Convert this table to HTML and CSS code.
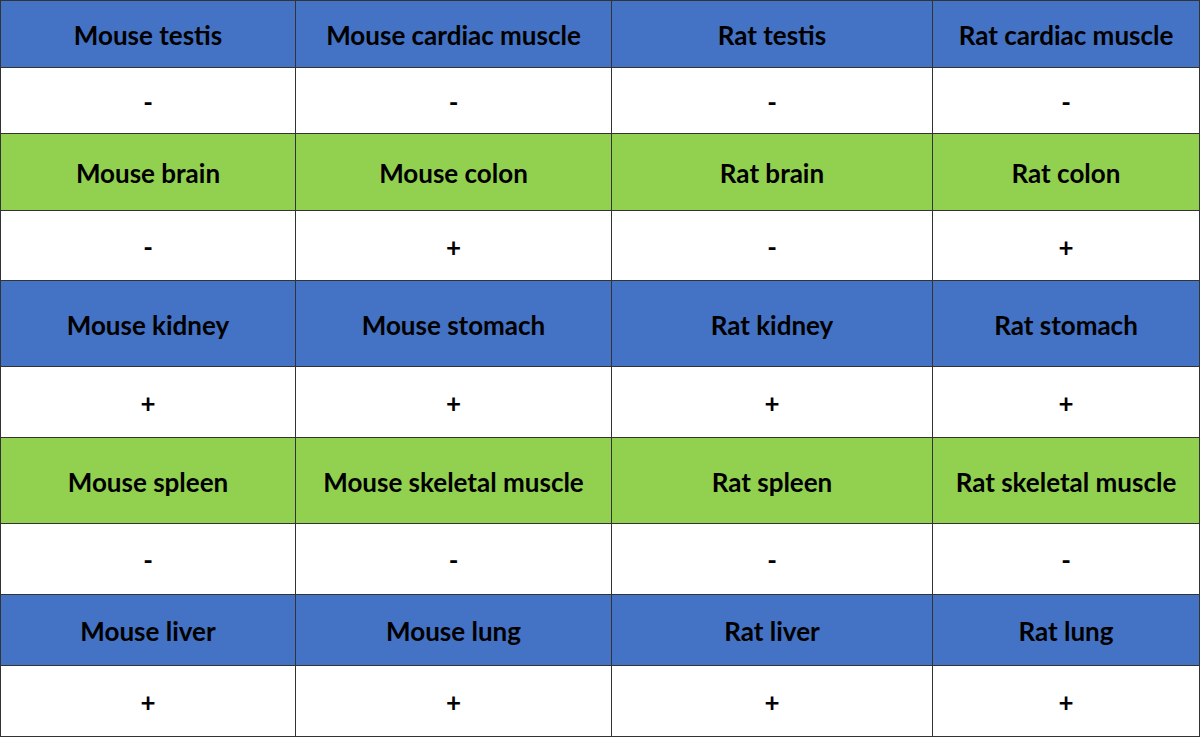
FILE: index.html
```html
<!DOCTYPE html>
<html>
<head>
<meta charset="utf-8">
<link rel="stylesheet" href="styles.css">
</head>
<body>
<div class="grid">
  <div class="cell blue">Mouse testis</div>
  <div class="cell blue">Mouse cardiac muscle</div>
  <div class="cell blue">Rat testis</div>
  <div class="cell blue">Rat cardiac muscle</div>
  <div class="cell val">-</div>
  <div class="cell val">-</div>
  <div class="cell val">-</div>
  <div class="cell val">-</div>
  <div class="cell green">Mouse brain</div>
  <div class="cell green">Mouse colon</div>
  <div class="cell green">Rat brain</div>
  <div class="cell green">Rat colon</div>
  <div class="cell val">-</div>
  <div class="cell val">+</div>
  <div class="cell val">-</div>
  <div class="cell val">+</div>
  <div class="cell blue">Mouse kidney</div>
  <div class="cell blue">Mouse stomach</div>
  <div class="cell blue">Rat kidney</div>
  <div class="cell blue">Rat stomach</div>
  <div class="cell val">+</div>
  <div class="cell val">+</div>
  <div class="cell val">+</div>
  <div class="cell val">+</div>
  <div class="cell green">Mouse spleen</div>
  <div class="cell green">Mouse skeletal muscle</div>
  <div class="cell green">Rat spleen</div>
  <div class="cell green">Rat skeletal muscle</div>
  <div class="cell val">-</div>
  <div class="cell val">-</div>
  <div class="cell val">-</div>
  <div class="cell val">-</div>
  <div class="cell blue">Mouse liver</div>
  <div class="cell blue">Mouse lung</div>
  <div class="cell blue">Rat liver</div>
  <div class="cell blue">Rat lung</div>
  <div class="cell val">+</div>
  <div class="cell val">+</div>
  <div class="cell val">+</div>
  <div class="cell val">+</div>
</div>
</body>
</html>
```
FILE: styles.css
```css
html, body {
  margin: 0;
  padding: 0;
  background: #ffffff;
}
.grid {
  width: 1200px;
  height: 737px;
  box-sizing: border-box;
  display: grid;
  grid-template-columns: 294px 315px 320px 266px;
  grid-template-rows: 66px 65px 76px 69px 85px 70px 85px 70px 70px 70px;
  gap: 1px;
  padding: 1px;
  background: #333333;
  font-family: Lato, "Open Sans", sans-serif;
  font-weight: 700;
  color: #000;
}
.cell {
  display: flex;
  align-items: center;
  justify-content: center;
  padding-top: 2px;
  font-size: 26px;
  white-space: nowrap;
}
.blue { background: #4472c4; }
.green { background: #92d050; }
.val { background: #ffffff; }
```
